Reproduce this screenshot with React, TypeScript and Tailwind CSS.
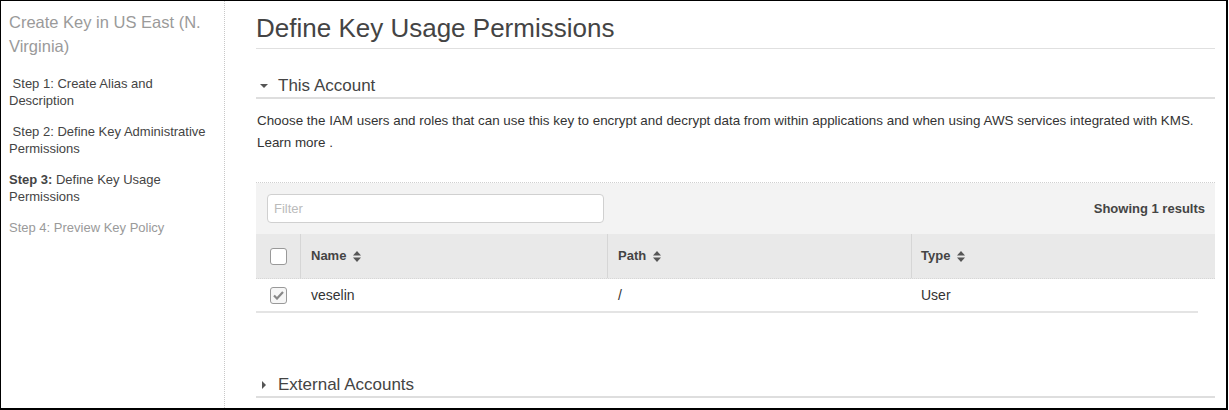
const SortIcon = () => (
    <svg width="8" height="11" viewBox="0 0 8 11" className="ml-[7px] inline-block">
        <path d="M4 0 L8 4.5 L0 4.5 Z" fill="#555" />
        <path d="M4 11 L8 6.5 L0 6.5 Z" fill="#555" />
    </svg>
)

const Caret = ({ open }: { open: boolean }) => (
    <svg width="10" height="10" viewBox="0 0 10 10" className="mr-[9px]">
        {open ? <path d="M1 3 L9 3 L5 7 Z" fill="#555" /> : <path d="M3 1 L7 5 L3 9 Z" fill="#555" />}
    </svg>
)

const App = () => {
    return (
        <div className="w-[1228px] h-[410px] bg-white border-l border-t border-r-2 border-b-2 border-black flex font-['Liberation_Sans',Arial,sans-serif] overflow-hidden">
            {/* sidebar */}
            <div className="w-[224px] shrink-0 border-r border-dotted border-[#c8c8c8] pl-[8px] pr-[4px] pt-[9px]">
                <h2 className="text-[16.5px] leading-[24px] text-[#9a9a9a]">Create Key in US East (N.<br />Virginia)</h2>
                <div className="mt-[17px] flex flex-col gap-[14px] text-[13px] leading-[17px] text-[#444]">
                    <p>&nbsp;Step 1: Create Alias and<br />Description</p>
                    <p>&nbsp;Step 2: Define Key Administrative<br />Permissions</p>
                    <p><b>Step 3:</b> Define Key Usage<br />Permissions</p>
                    <p className="text-[#9a9a9a]">Step 4: Preview Key Policy</p>
                </div>
            </div>

            {/* main */}
            <div className="flex-1 pl-[31px] pr-[11px] pt-[11px]">
                <h1 className="text-[26px] leading-[32px] text-[#444] pb-[4px] border-b border-[#e0e0e0]">Define Key Usage Permissions</h1>

                <div className="mt-[27px] flex items-center pl-[3px] pb-[1px] border-b-2 border-[#dedede]">
                    <Caret open={true} />
                    <span className="text-[17px] leading-[20px] text-[#444]">This Account</span>
                </div>

                <p className="mt-[11px] text-[13.4px] leading-[22px] text-[#333] pl-[1px]">
                    Choose the IAM users and roles that can use this key to encrypt and decrypt data from within applications and when using AWS services integrated with KMS.<br />Learn more .
                </p>

                <div className="mt-[28px] border-t border-dotted border-[#d0d0d0]">
                    <div className="h-[51px] bg-[#f3f3f3] flex items-center justify-between pl-[11px] pr-[10px]">
                        <div className="w-[337px] h-[29px] bg-white border border-[#d0d0d0] rounded-[4px] flex items-center px-[6px] text-[13px] text-[#bbb]">Filter</div>
                        <span className="text-[13px] font-bold text-[#444]">Showing 1 results</span>
                    </div>
                    <div className="grid grid-cols-[45px_307px_304px_1fr] h-[45px] bg-[#e9e9e9] text-[13px] font-bold text-[#444] border-b border-dotted border-[#d6d6d6]">
                        <div className="flex items-center justify-center border-r border-[#d6d6d6]">
                            <div className="w-[17px] h-[17px] bg-white border border-[#999] rounded-[3px]" />
                        </div>
                        <div className="flex items-center pl-[10px] border-r border-[#d6d6d6]">Name<SortIcon /></div>
                        <div className="flex items-center pl-[10px] border-r border-[#d6d6d6]">Path<SortIcon /></div>
                        <div className="flex items-center pl-[9px]">Type<SortIcon /></div>
                    </div>
                    <div className="grid grid-cols-[45px_307px_304px_1fr] h-[34px] text-[14px] text-[#333] border-b-2 border-[#e4e4e4] mr-[17px]">
                        <div className="flex items-center justify-center">
                            <div className="w-[17px] h-[17px] bg-[#f6f6f6] border border-[#999] rounded-[3px] flex items-center justify-center">
                                <svg width="11" height="9" viewBox="0 0 11 9">
                                    <path d="M1 4.5 L4 7.5 L10 1" stroke="#888" strokeWidth="2.2" fill="none" />
                                </svg>
                            </div>
                        </div>
                        <div className="flex items-center pl-[10px]">veselin</div>
                        <div className="flex items-center pl-[10px]">/</div>
                        <div className="flex items-center pl-[9px]">User</div>
                    </div>
                </div>

                <div className="mt-[62px] flex items-center pl-[3px] pb-[1px] border-b-2 border-[#dedede]">
                    <Caret open={false} />
                    <span className="text-[17px] leading-[20px] text-[#444]">External Accounts</span>
                </div>
            </div>
        </div>
    )
}
export default App;
